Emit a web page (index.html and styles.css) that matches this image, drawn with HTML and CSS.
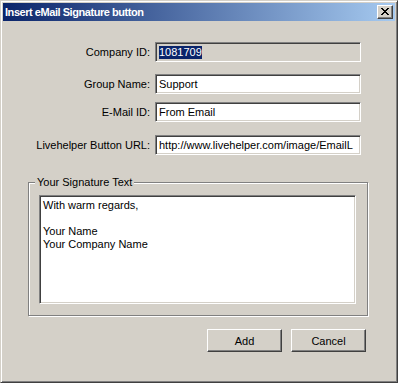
FILE: index.html
```html
<!DOCTYPE html>
<html>
<head>
<meta charset="utf-8">
<link rel="stylesheet" href="styles.css">
</head>
<body>
<div class="window">
  <div class="titlebar">
    <span class="title">Insert eMail Signature button</span>
    <div class="close">
      <svg width="8" height="7" viewBox="0 0 8 7"><path d="M0 0h2v1h-2zM6 0h2v1h-2zM1 1h2v1h-2zM5 1h2v1h-2zM2 2h4v1h-4zM3 3h2v1h-2zM2 4h4v1h-4zM1 5h2v1h-2zM5 5h2v1h-2zM0 6h2v1h-2zM6 6h2v1h-2z" fill="#000"/></svg>
    </div>
  </div>
  <div class="client">
    <div class="row r1">
      <div class="label">Company ID:</div>
      <div class="field readonly"><span class="sel">1081709</span></div>
    </div>
    <div class="row r2">
      <div class="label">Group Name:</div>
      <div class="field">Support</div>
    </div>
    <div class="row r3">
      <div class="label">E-Mail ID:</div>
      <div class="field">From Email</div>
    </div>
    <div class="row r4">
      <div class="label">Livehelper Button URL:</div>
      <div class="field">http://www.livehelper.com/image/EmailL</div>
    </div>
    <div class="group">
      <span class="legend">Your Signature Text</span>
      <div class="textarea">With warm regards,<br><br>Your Name<br>Your Company Name</div>
    </div>
    <div class="buttons">
      <div class="btn">Add</div>
      <div class="btn">Cancel</div>
    </div>
  </div>
</div>
</body>
</html>
```
FILE: styles.css
```css
* { box-sizing: border-box; }
html, body { margin: 0; padding: 0; background: #d4d0c8; }
body {
  font-family: "Liberation Sans", Arial, sans-serif;
  font-size: 11px;
  color: #000;
}
.window {
  width: 398px;
  height: 383px;
  background: #d4d0c8;
  border: 1px solid;
  border-color: #d4d0c8 #404040 #404040 #d4d0c8;
  box-shadow: inset 1px 1px 0 #fff, inset -1px -1px 0 #808080;
  padding: 2px;
}
.titlebar {
  height: 18px;
  background: linear-gradient(to right, #0a246a, #a6caf0);
  display: flex;
  align-items: center;
  justify-content: space-between;
  padding-left: 2px;
  padding-right: 2px;
}
.title {
  color: #fff;
  font-weight: bold;
  font-size: 11px;
  letter-spacing: -0.45px;
}
.close {
  width: 16px;
  height: 14px;
  background: #d4d0c8;
  border: 1px solid;
  border-color: #fff #404040 #404040 #fff;
  box-shadow: inset -1px -1px 0 #808080;
  display: flex;
  align-items: center;
  justify-content: center;
  padding-right: 1px;
  padding-bottom: 1px;
}
.close svg { display: block; }
.client {
  padding-top: 21px;
}
.row {
  display: flex;
  align-items: center;
  height: 20px;
}
.r2 { margin-top: 12px; }
.r3 { margin-top: 8px; }
.r4 { margin-top: 13px; }
.label {
  width: 147px;
  text-align: right;
  white-space: nowrap;
}
.field {
  margin-left: 5px;
  width: 206px;
  height: 20px;
  background: #fff;
  border: 1px solid;
  border-color: #808080 #fff #fff #808080;
  box-shadow: inset 1px 1px 0 #404040, inset -1px -1px 0 #d4d0c8;
  padding: 3px 3px 0 3px;
  line-height: 13px;
  white-space: nowrap;
  overflow: hidden;
}
.field.readonly { background: #d4d0c8; }
.sel {
  background: #0a246a;
  color: #fff;
  display: inline-block;
  line-height: 13px;
}
.group {
  position: relative;
  margin-top: 27px;
  margin-left: 25px;
  width: 340px;
  height: 134px;
  border: 1px solid #808080;
  box-shadow: inset 1px 1px 0 #fff, 1px 1px 0 #fff;
  padding: 12px 11px 11px 10px;
}
.legend {
  position: absolute;
  top: -7px;
  left: 6px;
  background: #d4d0c8;
  padding: 0 2px;
  line-height: 13px;
}
.textarea {
  width: 317px;
  height: 109px;
  background: #fff;
  border: 1px solid;
  border-color: #808080 #fff #fff #808080;
  box-shadow: inset 1px 1px 0 #404040, inset -1px -1px 0 #d4d0c8;
  padding: 3px 3px;
  line-height: 13px;
}
.buttons {
  display: flex;
  justify-content: flex-end;
  gap: 9px;
  margin-top: 13px;
  margin-right: 29px;
}
.btn {
  width: 75px;
  height: 23px;
  border: 1px solid;
  border-color: #fff #404040 #404040 #fff;
  box-shadow: inset -1px -1px 0 #808080;
  display: flex;
  align-items: center;
  justify-content: center;
}
```
